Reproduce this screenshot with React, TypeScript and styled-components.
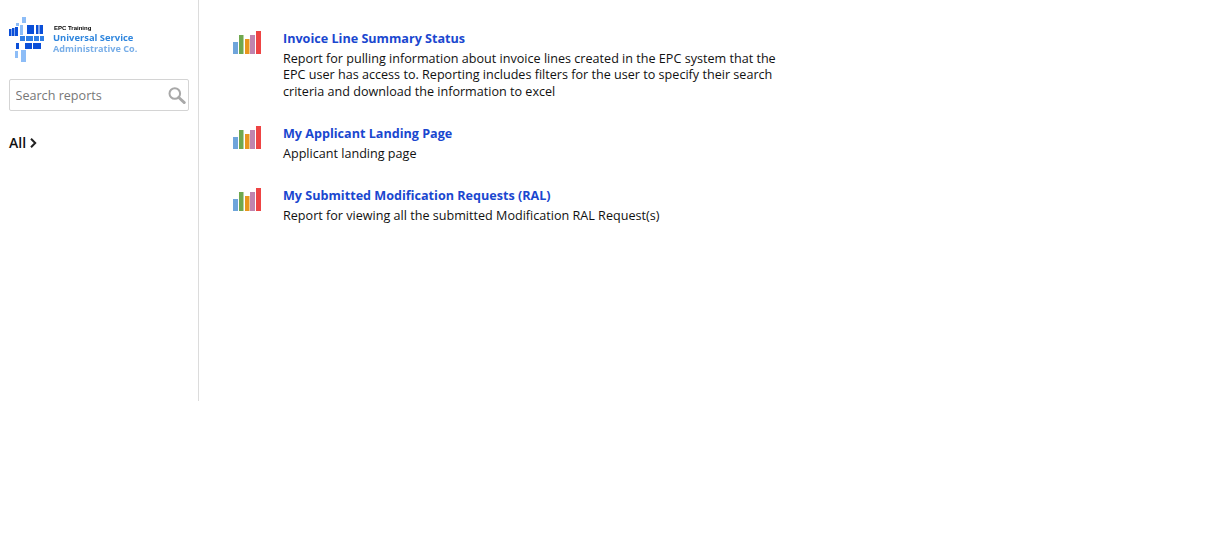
import React from "react";
import styled, { createGlobalStyle } from "styled-components";

const reports = [
  {
    title: "Invoice Line Summary Status",
    lines: [
      "Report for pulling information about invoice lines created in the EPC system that the",
      "EPC user has access to. Reporting includes filters for the user to specify their search",
      "criteria and download the information to excel",
    ],
  },
  { title: "My Applicant Landing Page", lines: ["Applicant landing page"] },
  {
    title: "My Submitted Modification Requests (RAL)",
    lines: ["Report for viewing all the submitted Modification RAL Request(s)"],
  },
];

function BarsIcon() {
  return (
    <svg width="28" height="24" viewBox="0 0 28 24">
      <rect x="0" y="11" width="5" height="12" fill="#6fa5db" />
      <rect x="6" y="4" width="4.5" height="19" fill="#6fa84f" />
      <rect x="12" y="8" width="4.5" height="15" fill="#e8961e" />
      <rect x="17" y="4" width="5" height="19" fill="#c084ae" />
      <rect x="23" y="0" width="5" height="23" fill="#ee4444" />
    </svg>
  );
}

function SearchIcon() {
  return (
    <svg width="18" height="17" viewBox="0 0 18 17" fill="none" stroke="#a8a8a8">
      <circle cx="6.8" cy="6.5" r="5.3" strokeWidth="2" />
      <path d="M10.8 10.5 L16.3 15.6" strokeWidth="2.8" strokeLinecap="round" />
    </svg>
  );
}

function LogoMark() {
  return (
    <LogoSvg width="36" height="46" viewBox="0 0 36 46">
      <g fill="#0b4fd8">
        <rect x="0" y="12" width="2.5" height="7" />
        <rect x="3" y="11" width="2.5" height="8" />
        <rect x="6" y="10" width="3" height="9" />
        <rect x="18" y="8" width="7" height="9" />
        <rect x="27" y="8" width="2.5" height="9" />
        <rect x="30.5" y="8" width="3.5" height="9" />
        <rect x="7" y="26" width="3" height="6" />
        <rect x="16" y="26" width="7" height="6" />
        <rect x="24" y="26" width="8" height="6" />
      </g>
      <g fill="#8dbdf7">
        <rect x="13" y="0" width="4" height="6" />
        <rect x="7" y="6" width="3" height="3" />
        <rect x="11" y="8" width="3" height="10" />
        <rect x="6" y="34" width="3" height="7" />
        <rect x="12" y="33" width="5" height="12" />
      </g>
      <g fill="#2f7fe6">
        <rect x="11" y="19" width="5" height="5" />
        <rect x="17" y="19" width="7" height="5" />
        <rect x="25" y="19" width="5" height="5" />
        <rect x="31" y="19" width="4" height="5" />
      </g>
    </LogoSvg>
  );
}

export default function App() {
  return (
    <>
      <GlobalStyle />
      <Page>
        <Sidebar>
          <Logo>
            <LogoMark />
            <LogoText>
              <LogoTop>EPC Training</LogoTop>
              <LogoLine>Universal Service</LogoLine>
              <LogoLine $faint>Administrative Co.</LogoLine>
            </LogoText>
          </Logo>
          <SearchBox>
            <SearchInput placeholder="Search reports" />
            <SearchIcon />
          </SearchBox>
          <AllLink>
            All
            <svg width="7" height="10" viewBox="0 0 7 10" fill="none" stroke="#222" strokeWidth="2">
              <path d="M1 0.8 L5.2 5 L1 9.2" />
            </svg>
          </AllLink>
        </Sidebar>
        <Content>
          {reports.map((report) => (
            <ReportRow key={report.title}>
              <IconCell>
                <BarsIcon />
              </IconCell>
              <div>
                <ReportTitle>{report.title}</ReportTitle>
                {report.lines.map((line) => (
                  <ReportLine key={line}>{line}</ReportLine>
                ))}
              </div>
            </ReportRow>
          ))}
        </Content>
      </Page>
    </>
  );
}

const GlobalStyle = createGlobalStyle`
  html, body {
    margin: 0;
    background: #fff;
    font-family: "Open Sans", sans-serif;
    color: #111;
  }
`;

const Page = styled.div`
  display: flex;
  width: 1215px;
  height: 535px;
  overflow: hidden;
`;

const Sidebar = styled.aside`
  box-sizing: border-box;
  width: 199px;
  height: 401px;
  padding: 17px 9px 0;
  border-right: 1px solid #dcdcdc;
`;

const Logo = styled.div`
  display: flex;
  gap: 8px;
  height: 62px;
`;

const LogoSvg = styled.svg`
  filter: blur(0.35px);
`;

const LogoText = styled.div`
  display: flex;
  flex-direction: column;
  padding-top: 6px;
  filter: blur(0.45px);
`;

const LogoTop = styled.span`
  font-family: "Liberation Sans", sans-serif;
  font-size: 6px;
  font-weight: 700;
  line-height: 10px;
  padding-left: 1px;
  color: #000;
`;

const LogoLine = styled.span<{ $faint?: boolean }>`
  font-size: ${(p) => (p.$faint ? "9.1px" : "9.4px")};
  font-weight: 700;
  line-height: 10.5px;
  white-space: nowrap;
  color: ${(p) => (p.$faint ? "#78aee8" : "#2f86de")};
`;

const SearchBox = styled.div`
  box-sizing: border-box;
  display: flex;
  align-items: center;
  width: 180px;
  height: 32px;
  padding: 0 2px 0 5.5px;
  border: 1px solid #d4d4d4;
  border-radius: 2px;
`;

const SearchInput = styled.input`
  flex: 1;
  min-width: 0;
  border: none;
  outline: none;
  padding: 0;
  font-family: "Open Sans", sans-serif;
  font-size: 12.6px;
  &::placeholder {
    color: #777;
    opacity: 1;
  }
`;

const AllLink = styled.div`
  display: flex;
  align-items: center;
  gap: 4px;
  margin-top: 22px;
  font-size: 14px;
  font-weight: 600;
  line-height: 20px;
  color: #111;
`;

const Content = styled.main`
  display: flex;
  flex-direction: column;
  gap: 24.8px;
  padding: 30px 0 0 34px;
`;

const ReportRow = styled.div`
  display: flex;
`;

const IconCell = styled.div`
  width: 50px;
  flex: none;
  padding-top: 1px;
`;

const ReportTitle = styled.div`
  font-size: 12.6px;
  font-weight: 700;
  line-height: 18px;
  color: #1a47cf;
  margin-bottom: 3px;
`;

const ReportLine = styled.div`
  font-size: 12.6px;
  line-height: 16.4px;
  white-space: nowrap;
  color: #111;
`;
